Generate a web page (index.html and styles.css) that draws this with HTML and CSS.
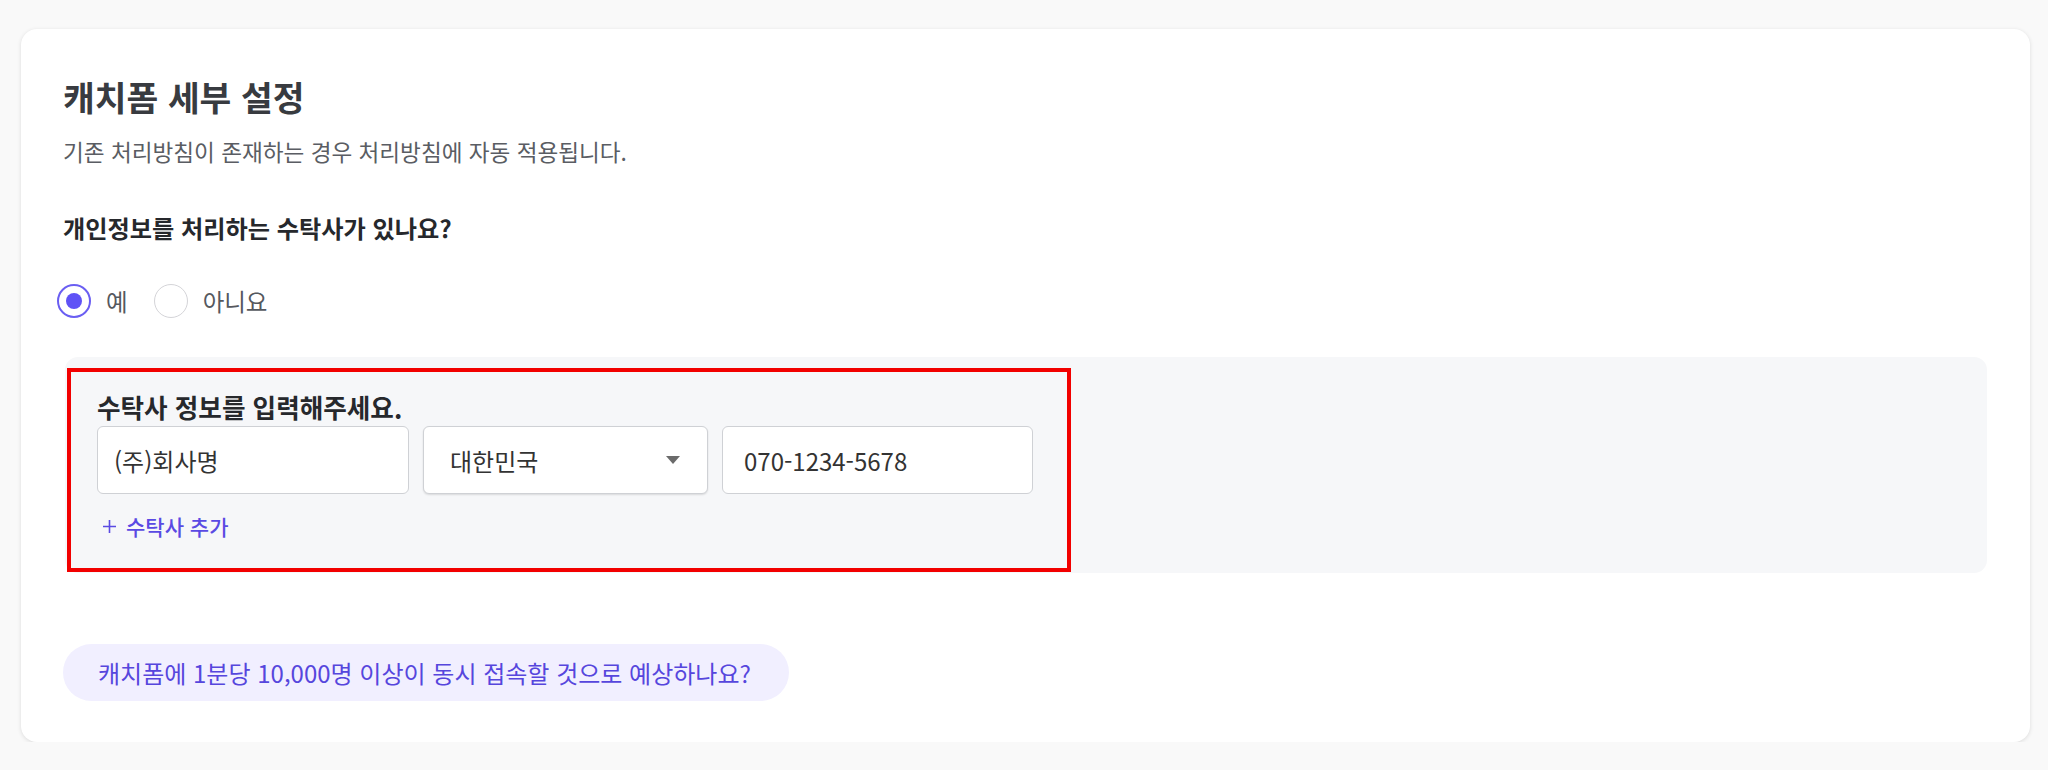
FILE: index.html
```html
<!DOCTYPE html>
<html lang="ko">
<head>
<meta charset="utf-8">
<title>캐치폼 세부 설정</title>
<link rel="stylesheet" href="styles.css">
</head>
<body>
<div class="card">
  <h1 class="title">캐치폼 세부 설정</h1>
  <p class="subtitle">기존 처리방침이 존재하는 경우 처리방침에 자동 적용됩니다.</p>
  <p class="question">개인정보를 처리하는 수탁사가 있나요?</p>
  <div class="radios">
    <label class="radio">
      <span class="circle checked"><span class="dot"></span></span>
      <span class="radio-label">예</span>
    </label>
    <label class="radio">
      <span class="circle"></span>
      <span class="radio-label">아니요</span>
    </label>
  </div>
  <div class="panel">
    <div class="highlight">
      <div class="field-label">수탁사 정보를 입력해주세요.</div>
      <div class="inputs">
        <div class="input w1">(주)회사명</div>
        <div class="input select w2">
          <span>대한민국</span>
          <svg class="caret" width="14" height="8" viewBox="0 0 14 8"><path d="M0 0 L14 0 L7 8 Z" fill="#6b6b6b"/></svg>
        </div>
        <div class="input w3">070-1234-5678</div>
      </div>
      <div class="add">
        <svg class="plus" width="15" height="15" viewBox="0 0 15 15"><path d="M7.5 1 V14 M1 7.5 H14" stroke="#5a4ae3" stroke-width="1.6" fill="none"/></svg>
        <span>수탁사 추가</span>
      </div>
    </div>
  </div>
  <div class="pill">캐치폼에 1분당 10,000명 이상이 동시 접속할 것으로 예상하나요?</div>
</div>
</body>
</html>
```
FILE: styles.css
```css
* { box-sizing: border-box; }
body {
  margin: 0;
  background: #f9f9f9;
  font-family: "Noto Sans CJK KR", "Noto Sans", sans-serif;
  color: #333;
}
.card {
  margin: 29px 18px 0 21px;
  background: #fff;
  border-radius: 16px;
  box-shadow: 0 1px 4px rgba(0,0,0,0.12);
  padding: 45px 43px 41px 42px;
}
.title {
  margin: 0;
  font-size: 34.5px;
  line-height: 44px;
  font-weight: 700;
  color: #383b40;
}
.subtitle {
  margin: 19px 0 0;
  font-size: 22.6px;
  line-height: 30px;
  color: #5a5d63;
}
.question {
  margin: 45px 0 0;
  font-size: 24.2px;
  line-height: 32px;
  font-weight: 600;
  color: #26282c;
}
.radios {
  margin: 40px 0 0 -6px;
  display: flex;
  align-items: center;
  gap: 26px;
  height: 34px;
}
.radio {
  display: flex;
  align-items: center;
  gap: 15px;
}
.circle {
  width: 34px;
  height: 34px;
  border-radius: 50%;
  border: 1.5px solid #d4d4d8;
  background: #fff;
  display: flex;
  align-items: center;
  justify-content: center;
}
.circle.checked { border: 2px solid #6a5ef2; }
.dot {
  width: 16px;
  height: 16px;
  border-radius: 50%;
  background: #5f52f6;
}
.radio-label {
  font-size: 23.5px;
  line-height: 30px;
  color: #55585e;
}
.panel {
  margin: 39px 0 0 2px;
  background: #f6f7f9;
  border-radius: 13px;
  padding: 11px 0 1px 2px;
}
.highlight {
  width: 1004px;
  border: 4px solid #f20000;
  padding: 20px 0 29px 26px;
}
.field-label {
  font-size: 25.6px;
  line-height: 30px;
  font-weight: 600;
  color: #26282c;
}
.inputs {
  margin-top: 4px;
  display: flex;
  gap: 14px;
}
.input {
  height: 68px;
  background: #fff;
  border: 1px solid #cfd1d5;
  border-radius: 6px;
  padding: 0 16px;
  display: flex;
  align-items: center;
  font-size: 24px;
  color: #333;
}
.w1 { width: 312px; }
.w2 { width: 285px; justify-content: space-between; padding: 0 27px 0 26px; box-shadow: 0 1px 2px rgba(0,0,0,0.12); }
.w3 { width: 311px; padding-left: 21px; }
.caret { display: block; }
.add {
  margin-top: 19px;
  display: flex;
  align-items: center;
  gap: 9px;
  height: 26px;
  padding-left: 5px;
  font-size: 21px;
  font-weight: 500;
  color: #5a4ae3;
}
.plus { display: block; }
.pill {
  margin-top: 71px;
  display: inline-flex;
  align-items: center;
  height: 57px;
  padding: 0 38px 0 35px;
  border-radius: 29px;
  background: #f1efff;
  font-size: 24px;
  color: #5646dd;
}
```
